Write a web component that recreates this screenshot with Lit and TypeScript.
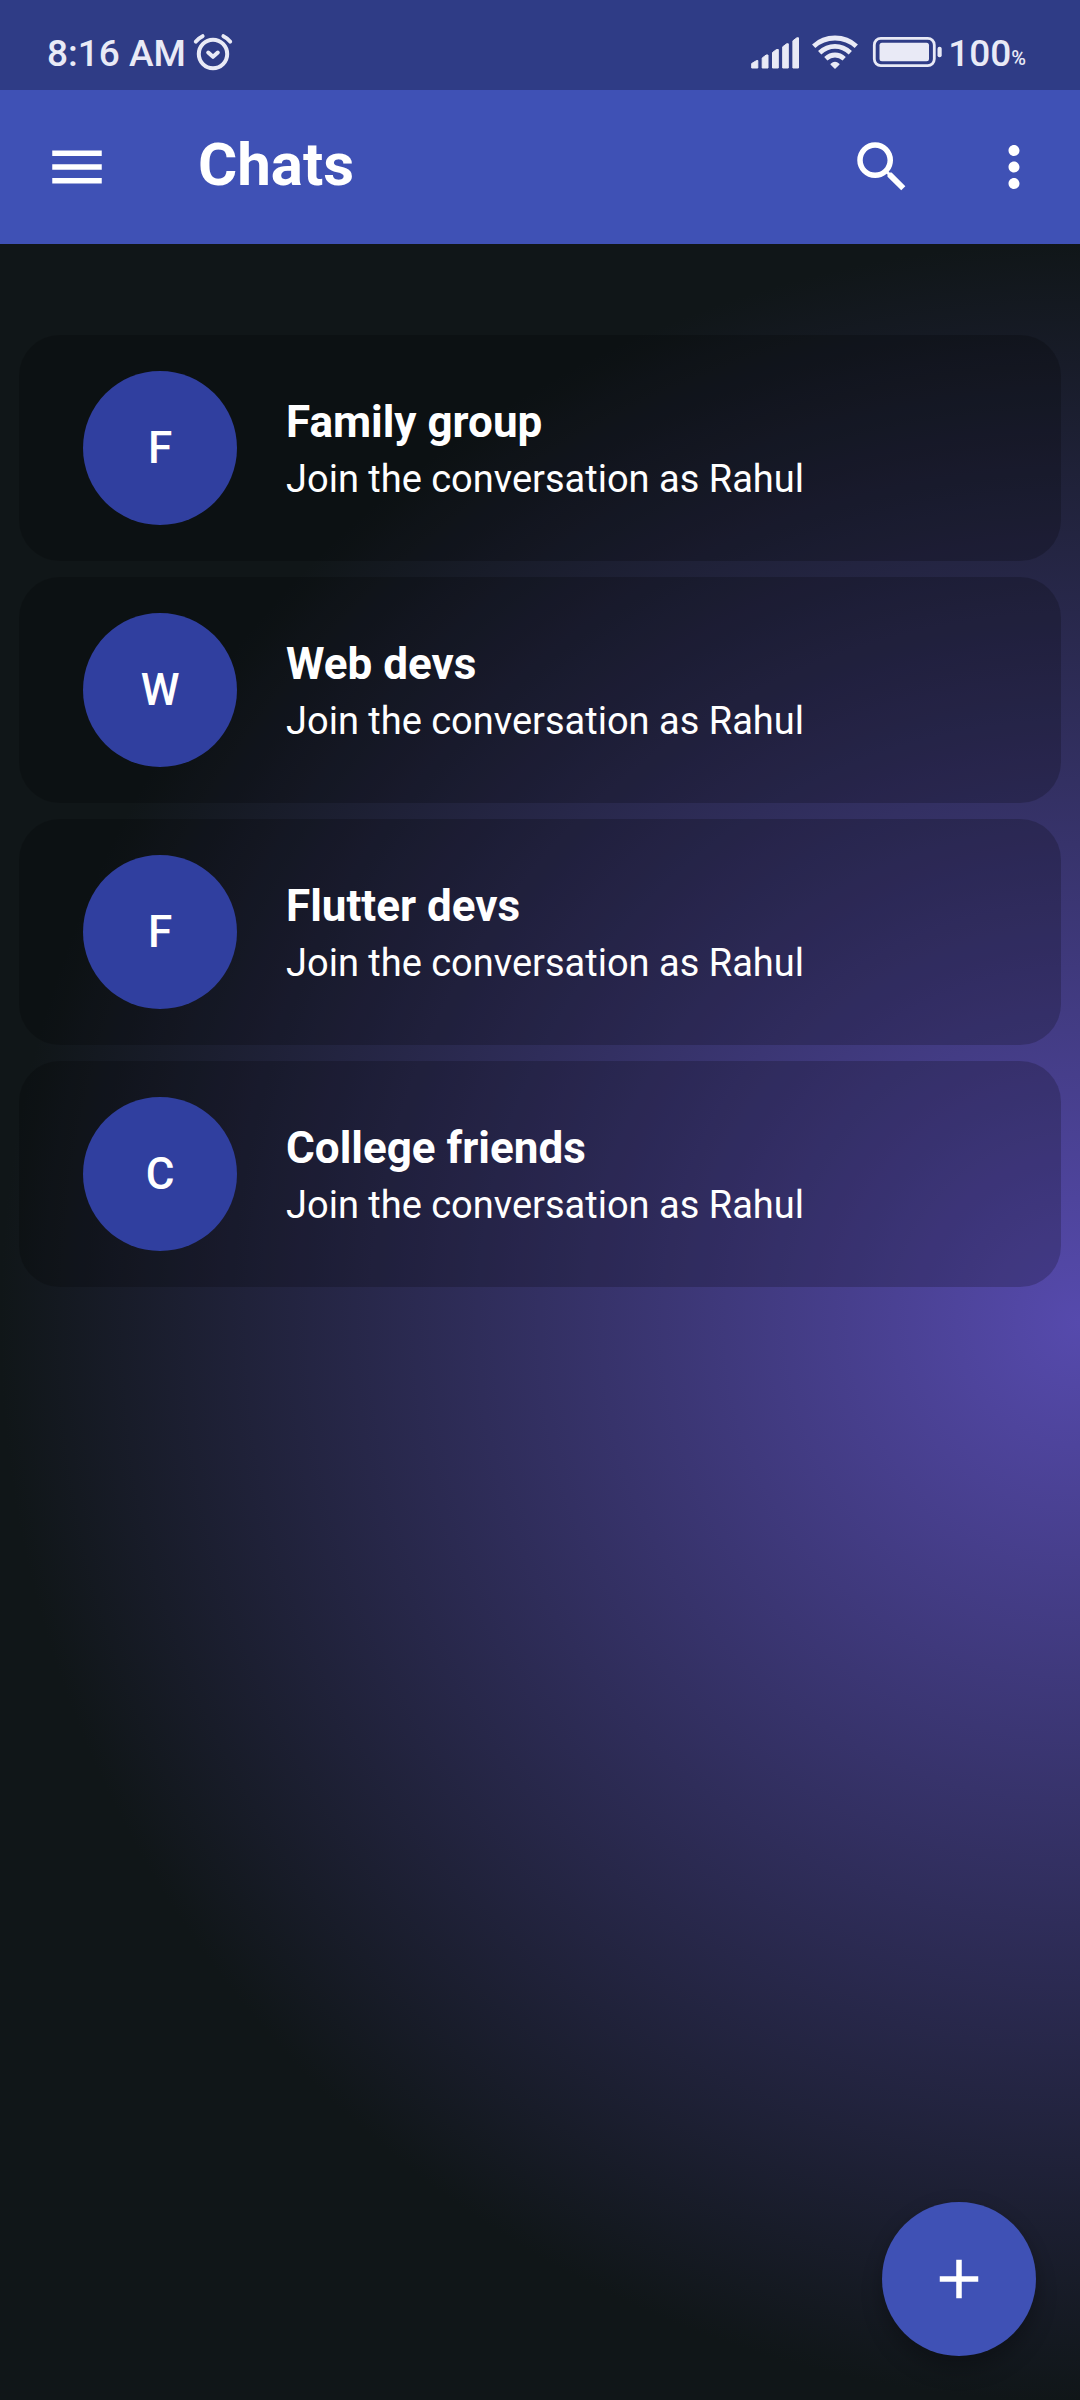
import { LitElement, html, css } from "lit";
import { customElement } from "lit/decorators.js";

const CHATS = ["Family group", "Web devs", "Flutter devs", "College friends"];
const USER = "Rahul";

@customElement("status-bar")
class StatusBar extends LitElement {
  static styles = css`
    :host {
      display: flex;
      align-items: center;
      justify-content: space-between;
      box-sizing: border-box;
      height: 90px;
      padding: 18px 54px 0 47px;
      background: #2f3c86;
      color: #e9eaf6;
      font: 500 37px/44px Roboto, sans-serif;
    }
    .side {
      display: flex;
      align-items: center;
    }
    svg {
      display: block;
      margin-bottom: 4px;
    }
    .alarm {
      margin-left: 7px;
    }
    .signal {
      margin-right: 13px;
    }
    .wifi {
      margin-right: 14px;
    }
    .battery {
      margin-right: 6px;
    }
    .percent {
      font-size: 20px;
      line-height: 24px;
      margin-top: 8px;
    }
  `;

  render() {
    return html`
      <div class="side">
        <span>8:16 AM</span>
        <svg class="alarm" width="40" height="38" viewBox="0 0 40 38" fill="none" stroke="currentColor" stroke-linecap="round" stroke-linejoin="round" role="img" aria-label="Alarm set">
          <circle cx="20" cy="21" r="14.2" stroke-width="4" />
          <path d="M15.200 19.500l4.800 4.300 4.800-4.300" stroke-width="4" />
          <path d="M2.800 8.600Q5 5.500 9.600 3.200M37.200 8.600Q35 5.500 30.400 3.200" stroke-width="4" />
        </svg>
      </div>
      <div class="side">
        <svg class="signal" width="48" height="34" viewBox="0 0 48 34" fill="currentColor" stroke="currentColor" stroke-width="1" stroke-linejoin="round" role="img" aria-label="Mobile signal">
          <path d="M.7 28.500l5-3h1.100v7.500H.7z" />
          <path d="M11.200 23l4-3h1.800v13h-5.800z" />
          <path d="M21.500 17.500l4-3h1.800v18.500h-5.800z" />
          <path d="M31.700 11.800l4-3h1.600V33h-5.600z" />
          <path d="M41.900 5.800l4-3h1.600V33h-5.600z" />
        </svg>
        <svg class="wifi" width="46" height="34" viewBox="0 0 46 34" fill="none" stroke="currentColor" stroke-width="4.8" role="img" aria-label="Wi-Fi">
          <path d="M1.700 11.200Q10.500 3 23 3T44.300 11.200" />
          <path d="M7.700 17.700Q14.500 11.400 23 11.400T38.300 17.700" />
          <path d="M13.800 23.700Q18 20 23 20T32.200 23.700" />
          <path d="M19.200 29.300Q23 25.600 26.800 29.300L23 33z" fill="currentColor" stroke-width="1.500" stroke-linejoin="round" />
        </svg>
        <svg class="battery" width="70" height="32" viewBox="0 0 70 32" role="img" aria-label="Battery full">
          <rect x="2.300" y="2.400" width="60" height="27.200" rx="6.500" fill="none" stroke="currentColor" stroke-width="2.800" />
          <rect x="7.500" y="6.800" width="49.500" height="18.400" rx="2.500" fill="currentColor" />
          <rect x="65.500" y="10.800" width="4.200" height="10.400" rx="2" fill="currentColor" />
        </svg>
        <span>100</span><span class="percent">%</span>
      </div>
    `;
  }
}

@customElement("top-bar")
class TopBar extends LitElement {
  static styles = css`
    :host {
      display: flex;
      align-items: center;
      box-sizing: border-box;
      height: 154px;
      padding: 0 33px 0 44px;
      background: #3f51b5;
      color: #ffffff;
    }
    button {
      display: block;
      padding: 0;
      border: 0;
      background: none;
      color: inherit;
      cursor: pointer;
    }
    svg {
      display: block;
      width: 66px;
      height: 66px;
    }
    h1 {
      flex: 1;
      margin: 0 0 4px 88px;
      font: 700 60px/72px Roboto, sans-serif;
    }
    .search {
      margin-right: 66px;
    }
  `;

  render() {
    return html`
      <button type="button" aria-label="Open menu">
        <svg viewBox="0 0 24 24" fill="currentColor"><path d="M3 18h18v-2H3v2zm0-5h18v-2H3v2zm0-7v2h18V6H3z" /></svg>
      </button>
      <h1>Chats</h1>
      <button class="search" type="button" aria-label="Search">
        <svg viewBox="0 0 24 24" fill="currentColor"><path d="M15.500 14h-.79l-.28-.27A6.471 6.471 0 0 0 16 9.500 6.500 6.500 0 1 0 9.500 16c1.610 0 3.090-.59 4.230-1.570l.27.28v.79l5 4.990L20.490 19l-4.990-5zm-6 0C7.010 14 5 11.990 5 9.500S7.010 5 9.500 5 14 7.010 14 9.500 11.990 14 9.500 14z" /></svg>
      </button>
      <button type="button" aria-label="More options">
        <svg viewBox="0 0 24 24" fill="currentColor"><path d="M12 8c1.100 0 2-.9 2-2s-.9-2-2-2-2 .9-2 2 .9 2 2 2zm0 2c-1.100 0-2 .9-2 2s.9 2 2 2 2-.9 2-2-.9-2-2-2zm0 6c-1.100 0-2 .9-2 2s.9 2 2 2 2-.9 2-2-.9-2-2-2z" /></svg>
      </button>
    `;
  }
}

@customElement("chat-list")
class ChatList extends LitElement {
  static styles = css`
    :host {
      display: block;
      padding: 91px 19px 0;
    }
    ul {
      display: flex;
      flex-direction: column;
      gap: 16px;
      margin: 0;
      padding: 0;
      list-style: none;
    }
    .chat {
      display: flex;
      align-items: center;
      gap: 49px;
      box-sizing: border-box;
      height: 226px;
      padding: 0 64px;
      border-radius: 41px;
      background: rgba(0, 0, 0, 0.2);
      color: #ffffff;
      font-family: Roboto, sans-serif;
      text-decoration: none;
    }
    .avatar {
      display: grid;
      place-items: center;
      flex: none;
      width: 154px;
      height: 154px;
      border-radius: 50%;
      background: #303f9f;
      font-size: 44px;
      font-weight: 500;
      line-height: 52px;
    }
    .text {
      display: flex;
      flex-direction: column;
      gap: 5px;
      min-width: 0;
      padding-top: 5px;
    }
    .name {
      font-size: 44px;
      font-weight: 700;
      line-height: 52px;
    }
    .hint {
      font-size: 38px;
      line-height: 52px;
    }
  `;

  render() {
    return html`
      <ul>
        ${CHATS.map(
          (name) => html`
            <li>
              <a class="chat" href="#">
                <span class="avatar" aria-hidden="true">${name[0]}</span>
                <span class="text">
                  <span class="name">${name}</span>
                  <span class="hint">Join the conversation as ${USER}</span>
                </span>
              </a>
            </li>
          `
        )}
      </ul>
    `;
  }
}

@customElement("app-root")
class AppRoot extends LitElement {
  static styles = css`
    :host {
      display: flex;
      flex-direction: column;
      min-height: 100vh;
    }
    main {
      flex: 1;
      background: radial-gradient(circle 100vw at 100% 50%, #564aad, #101618);
    }
    .add {
      position: fixed;
      right: 44px;
      bottom: 44px;
      display: grid;
      place-items: center;
      width: 154px;
      height: 154px;
      padding: 0;
      border: 0;
      border-radius: 50%;
      background: #3f51b5;
      box-shadow: 0 14px 22px rgba(0, 0, 0, 0.18), 0 4px 20px rgba(0, 0, 0, 0.12);
      color: #ffffff;
      cursor: pointer;
    }
    .add svg {
      width: 66px;
      height: 66px;
    }
  `;

  render() {
    return html`
      <status-bar></status-bar>
      <top-bar></top-bar>
      <main>
        <chat-list></chat-list>
      </main>
      <button class="add" type="button" aria-label="New chat">
        <svg viewBox="0 0 24 24" fill="currentColor"><path d="M19 13h-6v6h-2v-6H5v-2h6V5h2v6h6v2z" /></svg>
      </button>
    `;
  }
}
